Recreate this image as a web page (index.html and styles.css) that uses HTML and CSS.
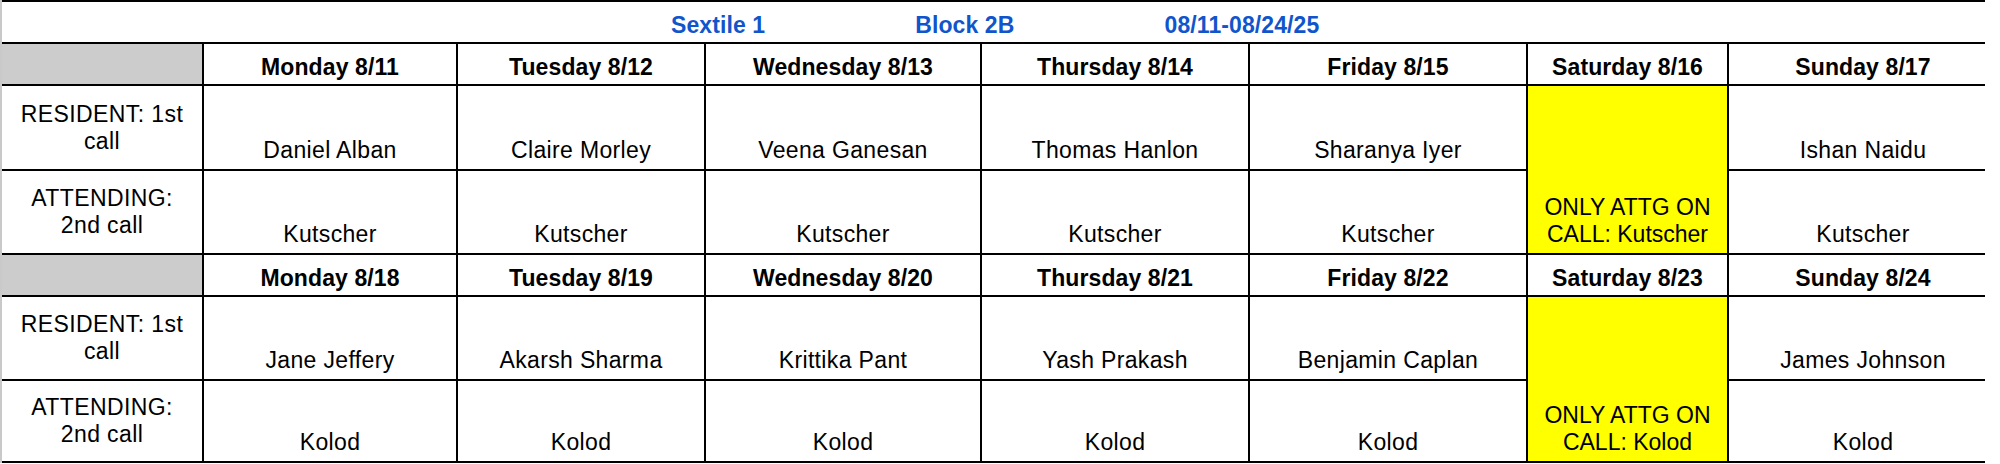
FILE: index.html
```html
<!DOCTYPE html>
<html lang="en">
<head>
<meta charset="utf-8">
<title>Sextile 1 - Block 2B call schedule</title>
<link rel="stylesheet" href="styles.css">
</head>
<body>
<div class="sheet">
  <div class="title"><span>Sextile 1</span><span>Block 2B</span><span>08/11-08/24/25</span></div>

  <div class="corner"></div>
  <div class="day">Monday 8/11</div>
  <div class="day">Tuesday 8/12</div>
  <div class="day">Wednesday 8/13</div>
  <div class="day">Thursday 8/14</div>
  <div class="day">Friday 8/15</div>
  <div class="day">Saturday 8/16</div>
  <div class="day">Sunday 8/17</div>

  <div class="label">RESIDENT: 1st<br>call</div>
  <div class="cell">Daniel Alban</div>
  <div class="cell">Claire Morley</div>
  <div class="cell">Veena Ganesan</div>
  <div class="cell">Thomas Hanlon</div>
  <div class="cell">Sharanya Iyer</div>
  <div class="cell weekend">ONLY ATTG ON CALL: Kutscher</div>
  <div class="cell">Ishan Naidu</div>

  <div class="label">ATTENDING:<br>2nd call</div>
  <div class="cell">Kutscher</div>
  <div class="cell">Kutscher</div>
  <div class="cell">Kutscher</div>
  <div class="cell">Kutscher</div>
  <div class="cell">Kutscher</div>
  <div class="cell">Kutscher</div>

  <div class="corner"></div>
  <div class="day">Monday 8/18</div>
  <div class="day">Tuesday 8/19</div>
  <div class="day">Wednesday 8/20</div>
  <div class="day">Thursday 8/21</div>
  <div class="day">Friday 8/22</div>
  <div class="day">Saturday 8/23</div>
  <div class="day">Sunday 8/24</div>

  <div class="label">RESIDENT: 1st<br>call</div>
  <div class="cell">Jane Jeffery</div>
  <div class="cell">Akarsh Sharma</div>
  <div class="cell">Krittika Pant</div>
  <div class="cell">Yash Prakash</div>
  <div class="cell">Benjamin Caplan</div>
  <div class="cell weekend">ONLY ATTG ON CALL: Kolod</div>
  <div class="cell">James Johnson</div>

  <div class="label">ATTENDING:<br>2nd call</div>
  <div class="cell">Kolod</div>
  <div class="cell">Kolod</div>
  <div class="cell">Kolod</div>
  <div class="cell">Kolod</div>
  <div class="cell">Kolod</div>
  <div class="cell">Kolod</div>
</div>
</body>
</html>
```

FILE: styles.css
```css
html, body {
  margin: 0;
  padding: 0;
  background: #ffffff;
}

body {
  font-family: "Liberation Sans", Arial, sans-serif;
  font-size: 23px;
  line-height: 27px;
  color: #000000;
}

.sheet {
  display: grid;
  grid-template-columns: 200px 252px 246px 274px 266px 276px 199px 268px;
  grid-template-rows: 40px 40px 83px 82px 40px 82px 80px;
  gap: 2px;
  width: 1981px;
  padding: 2px 2px 2px 0;
  border-left: 2px solid #c9c9c9;
  background: #000000;
}

.title {
  grid-column: 1 / -1;
  display: flex;
  align-items: flex-end;
  gap: 150px;
  padding: 0 0 3px 669px;
  background: #ffffff;
  color: #1155cc;
  font-weight: bold;
  letter-spacing: 0.1px;
}

.corner {
  background: #cccccc;
}

.day {
  display: flex;
  align-items: flex-end;
  justify-content: center;
  padding: 0 4px 3px;
  background: #ffffff;
  font-weight: bold;
  white-space: nowrap;
  letter-spacing: 0.1px;
}

.label {
  display: flex;
  align-items: center;
  justify-content: center;
  text-align: center;
  padding: 0 4px;
  background: #ffffff;
  letter-spacing: 0.4px;
}

.cell {
  display: flex;
  align-items: flex-end;
  justify-content: center;
  text-align: center;
  padding: 0 4px 5px;
  background: #ffffff;
  letter-spacing: 0.35px;
}

.weekend {
  grid-row: span 2;
  background: #ffff00;
  letter-spacing: 0;
}
```
